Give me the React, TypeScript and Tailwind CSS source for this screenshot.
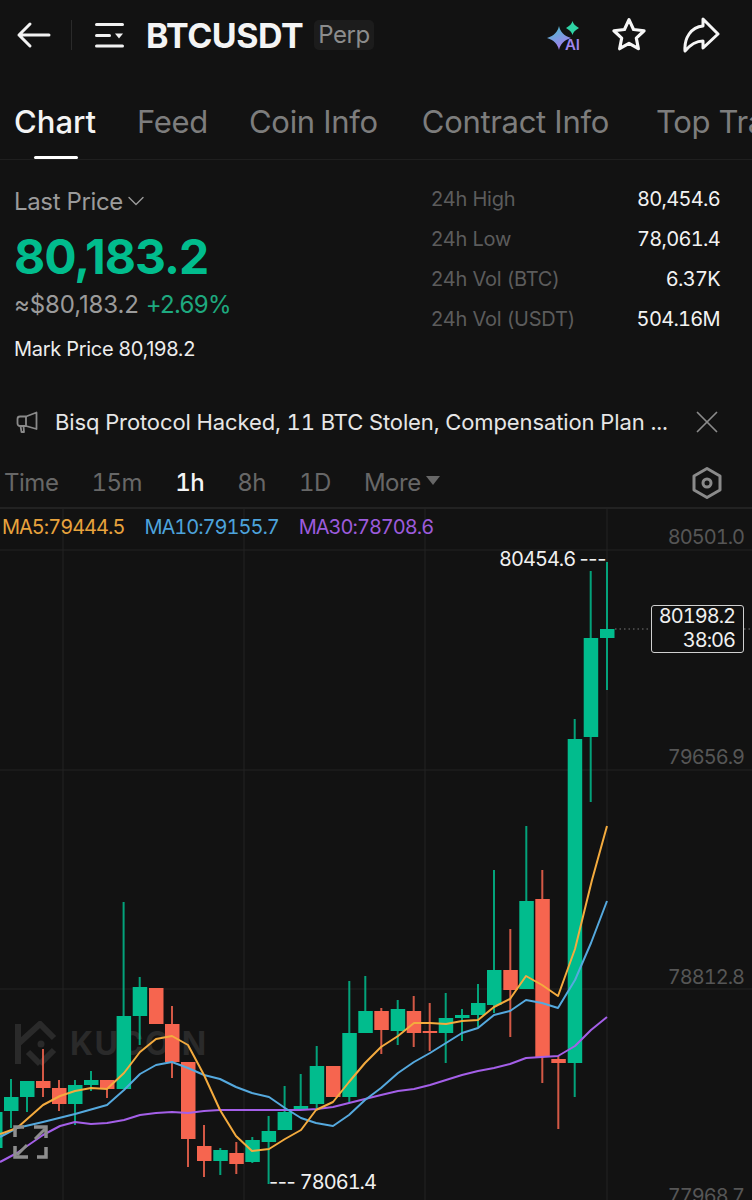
import { ChevronDown, X } from 'lucide-react';

const UP = '#01bc8d';
const DOWN = '#f6654f';

// x centre, body top, body bottom, wick top, wick bottom
const candles: [number, number, number, number, number, string][] = [
  [-5, 1112, 1148, 1100, 1150, UP],
  [11, 1097, 1111, 1079, 1128, UP],
  [27, 1081, 1097, 1081, 1112, UP],
  [43, 1081, 1088, 1049, 1097, DOWN],
  [59, 1088, 1104, 1080, 1111, DOWN],
  [75, 1085, 1104, 1080, 1125, UP],
  [91, 1080, 1085, 1071, 1091, UP],
  [107, 1080, 1089, 1080, 1098, DOWN],
  [123.6, 1016, 1089, 902, 1089, UP],
  [139.7, 987, 1016, 977, 1045, UP],
  [156, 988, 1024, 988, 1024, DOWN],
  [172, 1024, 1062, 1006, 1078, DOWN],
  [188, 1062, 1139, 1062, 1167, DOWN],
  [204, 1146, 1161, 1125, 1177, DOWN],
  [220.3, 1150, 1161, 1148, 1175, UP],
  [236.3, 1153, 1164, 1142, 1174, DOWN],
  [252.3, 1140, 1162, 1137, 1163, UP],
  [268.6, 1131, 1142, 1116, 1184, UP],
  [284.6, 1112, 1130, 1086, 1130, UP],
  [300.7, 1106, 1110, 1074, 1110, UP],
  [316.7, 1066, 1104, 1046, 1108, UP],
  [333, 1066, 1097, 1066, 1097, DOWN],
  [349.3, 1033, 1097, 981, 1102, UP],
  [365.3, 1011, 1033, 976, 1033, UP],
  [381.3, 1011, 1030, 1008, 1054, DOWN],
  [397.7, 1009, 1031, 1000, 1045, UP],
  [413.7, 1011, 1033, 996, 1047, DOWN],
  [429.7, 1031, 1033, 1003, 1051, DOWN],
  [445.7, 1018, 1033, 993, 1063, UP],
  [462, 1015, 1018, 1009, 1041, UP],
  [478, 1003, 1015, 984, 1027, UP],
  [494, 970, 1005, 870, 1013, UP],
  [510.3, 970, 990, 929, 1037, DOWN],
  [526.3, 901, 989, 826, 989, UP],
  [542.3, 899, 1057, 870, 1083, DOWN],
  [558.3, 1059, 1063, 1056, 1129, DOWN],
  [574.7, 739, 1063, 719, 1097, UP],
  [590.7, 638, 737, 571, 802, UP],
  [607, 629, 638, 562, 690, UP],
];

const ma5 = '0,1134 17,1128 43,1105 60,1096 75,1091 91,1088 107,1089 124,1073 140,1052 156,1039 172,1036 188,1045 204,1075 220,1110 236,1136 252,1151 269,1149 285,1139 301,1130 316,1110 333,1102 349,1082 365,1063 381,1047 398,1036 414,1023 430,1023 446,1024 462,1021 478,1020 494,1007 510,999 526,976 542,985 558,996 575,949 592,880 607,826';
const ma10 = '0,1137 17,1128 43,1122 75,1114 107,1105 124,1090 140,1074 156,1065 172,1062 188,1068 204,1075 220,1079 236,1087 252,1093 269,1097 285,1108 301,1118 316,1123 333,1126 349,1115 365,1100 381,1088 398,1073 414,1062 430,1053 446,1043 462,1033 478,1028 494,1015 510,1011 526,1000 542,1003 558,1008 575,980 591,943 607,901';
const ma30 = '0,1162 17,1153 43,1135 60,1126 75,1122 91,1124 107,1123 124,1120 140,1115 156,1113 172,1112 188,1113 204,1111 220,1110 252,1110 285,1110 300,1110 317,1109 333,1107 349,1103 365,1099 381,1095 398,1091 414,1089 430,1085 446,1080 462,1075 478,1071 494,1068 510,1064 526,1058 542,1057 558,1056 575,1046 591,1030 607,1017';

const stats = [
  ['24h High', '80,454.6'],
  ['24h Low', '78,061.4'],
  ['24h Vol (BTC)', '6.37K'],
  ['24h Vol (USDT)', '504.16M'],
];

const axis = [
  ['80501.0', 'top-[16px]'],
  ['79656.9', 'top-[236px]'],
  ['78812.8', 'top-[456px]'],
  ['77968.7', 'top-[675px]'],
];

function Header() {
  return (
    <div className="flex h-[70px] items-center">
      <svg width="36" height="30" viewBox="0 0 36 30" fill="none" stroke="#f2f2f2" strokeWidth="3" strokeLinecap="round" strokeLinejoin="round" className="ml-[16px]">
        <path d="M33 15H3M14 4 3 15l11 11" />
      </svg>
      <div className="ml-[19px] h-[30px] w-px bg-[#2a2a2a]" />
      <svg width="30" height="26" viewBox="0 0 30 26" fill="#f2f2f2" className="ml-[23px]">
        <rect x="0" y="1" width="29" height="3" rx="1.5" />
        <rect x="0" y="12" width="16" height="3" rx="1.5" />
        <path d="M20 11.5h8l-4 5z" />
        <rect x="0" y="22.5" width="29" height="3" rx="1.5" />
      </svg>
      <span className="ml-[21px] w-[158px] whitespace-nowrap text-[34px] font-bold tracking-[-0.015em] text-[#f4f4f4]">BTCUSDT</span>
      <span className="ml-[10px] flex h-[30px] w-[60px] items-center justify-center rounded-[5px] bg-[#1c1c1c] text-[24px] tracking-[-0.02em] text-[#8c8c8c]">Perp</span>
      <div className="relative ml-[172px] h-[32px] w-[34px]">
        <svg width="34" height="32" viewBox="0 0 34 32">
          <defs>
            <linearGradient id="spark" x1="0" y1="0" x2="0.5" y2="1">
              <stop offset="0" stopColor="#3fc6c8" />
              <stop offset="1" stopColor="#a67bf0" />
            </linearGradient>
          </defs>
          <path d="M13 7c1.500 6 4.500 9.500 12 12-7.500 2.500-10.500 6-12 12-1.500-6-4.500-9.500-12-12 7.500-2.500 10.500-6 12-12z" fill="url(#spark)" />
          <path d="M26.500 2c.8 3 2.500 4.700 6.500 7-4 2.300-5.700 4-6.500 7-.8-3-2.500-4.700-6.500-7 4-2.300 5.700-4 6.500-7z" fill="#2fd3a5" />
        </svg>
        <span className="absolute right-[0px] bottom-[-1px] text-[15px] font-semibold leading-none text-[#9f86ee]">AI</span>
      </div>
      <svg width="38" height="38" viewBox="0 0 36 36" fill="none" stroke="#f6f6f6" strokeWidth="3" strokeLinejoin="round" className="ml-[30px]">
        <path d="M18 3.500l4.300 9.300 10 1.200-7.400 6.900 2 10.100L18 25.900 9.100 31l2-10.100L3.700 14l10-1.200z" />
      </svg>
      <svg width="38" height="38" viewBox="0 0 38 38" fill="none" stroke="#f6f6f6" strokeWidth="3" strokeLinejoin="round" strokeLinecap="round" className="ml-[34px]">
        <path d="M21 3 36 18 21 32v-7c-8 0-13 4-18 10C2 22 9 11 21 10z" />
      </svg>
    </div>
  );
}

function Tabs() {
  return (
    <div className="relative flex h-[90px] gap-[41px] overflow-hidden whitespace-nowrap border-b border-[#1f1f1f] pl-[14px] pt-[30px] text-[31px] leading-[44px] tracking-[-0.01em] text-[#7d7d7d]">
      <div className="relative h-[59px] font-medium tracking-normal text-[#f4f4f4]">
        Chart
        <div className="absolute bottom-0 left-[20px] h-[3px] w-[44px] rounded-sm bg-white" />
      </div>
      <span>Feed</span>
      <span>Coin Info</span>
      <span className="ml-[3px]">Contract Info</span>
      <span className="ml-[6px]">Top Traders</span>
    </div>
  );
}

function PriceBlock() {
  return (
    <div className="flex h-[240px] pl-[14px] pt-[24px]">
      <div className="w-[417px]">
        <div className="flex h-[36px] items-center text-[24px] tracking-[-0.015em] text-[#9b9b9b]">
          Last Price
          <ChevronDown size={28} strokeWidth={1.2} className="-ml-[1px] mb-[3px] -mr-[7px]" />
        </div>
        <div className="mt-[6px] h-[62px] text-[48px] font-bold leading-[62px] tracking-[-0.02em] text-[#01bc8d]">80,183.2</div>
        <div className="flex h-[34px] items-center text-[24px] tracking-[-0.005em] text-[#9b9b9b]">
          ≈$80,183.2
          <span className="ml-[7px] tracking-[-0.03em] text-[#1ea97f]">+2.69%</span>
        </div>
        <div className="mt-[11px] text-[20px] leading-[32px] tracking-[-0.015em] text-[#ededed]">Mark Price 80,198.2</div>
      </div>
      <div className="mt-[-5px] w-[289px]">
        {stats.map(([label, value]) => (
          <div key={label} className="flex h-[40px] items-center justify-between text-[20px]">
            <span className="tracking-[-0.01em] text-[#5c5c5c]">{label}</span>
            <span className="tabular-nums tracking-[-0.035em] text-[#f2f2f2]">{value}</span>
          </div>
        ))}
      </div>
    </div>
  );
}

function NewsBar() {
  return (
    <div className="flex h-[44px] items-center pl-[16px] text-[22px] text-[#e6e6e6]">
      <svg width="22" height="24" viewBox="0 0 22 24" fill="none" stroke="#8a8a8a" strokeWidth="1.800" strokeLinejoin="round">
        <path d="M10 6.500 20.500 2.500v16.500L10 16H4a2.500 2.500 0 0 1-2.500-2.500V9A2.500 2.500 0 0 1 4 6.500z" />
        <path d="M10 6.500V16M4.500 16l1 6h2.500l-.5-6" />
      </svg>
      <span className="ml-[17px] w-[625px] truncate whitespace-nowrap tabular-nums tracking-[-0.005em]">Bisq Protocol Hacked, 11 BTC Stolen, Compensation Plan ...</span>
      <X size={38} strokeWidth={1.1} className="ml-[8px] text-[#8a8a8a]" />
    </div>
  );
}

function Intervals() {
  return (
    <div className="relative mt-[18px] flex h-[47px] items-center gap-[33px] border-b-2 border-[#222222] pb-[3px] pl-[4px] text-[24px] tabular-nums tracking-[-0.02em] text-[#676767]">
      <span>Time</span>
      <span>15m</span>
      <span className="font-medium text-[#f4f4f4]">1h</span>
      <span>8h</span>
      <span>1D</span>
      <span className="flex items-center">
        More
        <svg width="14" height="10" viewBox="0 0 14 10" fill="#676767" className="ml-[5px] mb-[4px]"><path d="M0 0h14L7 9z" /></svg>
      </span>
      <svg width="32" height="34" viewBox="0 0 32 34" fill="none" stroke="#8a8a8a" strokeWidth="3" strokeLinejoin="round" className="absolute right-[29px] top-[4px]">
        <path d="M16 2.500 29 10v14l-13 7.500L3 24V10z" />
        <circle cx="16" cy="17" r="4" />
      </svg>
    </div>
  );
}

function Chart() {
  return (
    <div className="relative h-[691px] overflow-hidden tabular-nums">
      {/* watermark */}
      <svg width="44" height="46" viewBox="0 0 44 46" fill="none" stroke="#2a2a2a" strokeWidth="6" className="absolute left-[14px] top-[512px]">
        <path d="M4 3v40M4 23 26 3l14 14M26 43 14 31M26 43l14-14" />
        <circle cx="27" cy="23" r="3.500" fill="#2a2a2a" stroke="none" />
      </svg>
      <div className="absolute left-[70px] top-[511px] text-[32px] font-bold leading-[48px] tracking-[0.05em] text-[#2a2a2a]">KUCOIN</div>

      {/* y values in the svg are page coordinates, hence the viewBox offset */}
      <svg width="752" height="691" viewBox="0 509 752 691" fill="none" className="absolute inset-0">
        {[63, 244, 425, 607].map(x => <path key={x} d={`M${x} 509V1200`} stroke="#232323" strokeWidth="1" />)}
        {[550, 770, 989].map(y => <path key={y} d={`M0 ${y}H752`} stroke="#232323" strokeWidth="1" />)}
        <path d="M615 629H650M744 629H752" stroke="#555555" strokeWidth="1.500" strokeDasharray="1.500 3" />
        {candles.map(([x, top, bottom, wickTop, wickBottom, color]) => (
          <g key={x}>
            <rect x={x - 1} y={wickTop} width="2" height={wickBottom - wickTop} fill={color} opacity="0.85" />
            <rect x={x - 7} y={top} width="14.500" height={bottom - top} fill={color} />
          </g>
        ))}
        <polyline points={ma30} stroke="#a45fe8" strokeWidth="2" strokeLinejoin="round" />
        <polyline points={ma10} stroke="#55a9de" strokeWidth="2" strokeLinejoin="round" />
        <polyline points={ma5} stroke="#f4ab3e" strokeWidth="2" strokeLinejoin="round" />
        {/* fullscreen */}
        <g stroke="#8e8e8e" strokeWidth="3.500">
          <path d="M15 1137v-10h9M34 1127h12v11M46 1147v10h-9M28 1157H15v-11" />
          <path d="M17 1155l10-10M35 1139l10-10" strokeWidth="3" />
        </g>
      </svg>

      <div className="absolute left-[2px] top-[5px] flex gap-[20px] text-[20px] leading-[26px] tracking-[-0.05em]">
        <span className="text-[#e8a33d]">MA5:79444.5</span>
        <span className="text-[#4da3dc]">MA10:79155.7</span>
        <span className="text-[#9c5bdc]">MA30:78708.6</span>
      </div>

      {axis.map(([value, top]) => (
        <div key={value} className={`absolute right-[8px] text-[20px] leading-[24px] tracking-[-0.05em] text-[#565656] ${top}`}>{value}</div>
      ))}

      <div className="absolute left-[499px] top-[38px] text-[20px] leading-[24px] tracking-[-0.05em] text-[#f0f0f0]">
        80454.6 <span className="normal-nums tracking-[-0.02em]">---</span>
      </div>
      <div className="absolute left-[269px] top-[661px] text-[20px] leading-[24px] tracking-[-0.05em] text-[#f0f0f0]">
        <span className="normal-nums tracking-[-0.02em]">---</span> 78061.4
      </div>

      <div className="absolute left-[651px] top-[96px] flex h-[48px] w-[93px] flex-col items-end justify-center rounded-[3px] border border-[#d0d0d0] pb-[2px] pr-[8px] text-[20px] leading-[24px] tracking-[-0.05em] text-[#f0f0f0]">
        <span>80198.2</span>
        <span>38:06</span>
      </div>
    </div>
  );
}

export default function App() {
  return (
    <div className="h-[1200px] w-[752px] overflow-hidden bg-[#121212] font-['Inter',sans-serif]">
      <Header />
      <Tabs />
      <PriceBlock />
      <NewsBar />
      <Intervals />
      <Chart />
    </div>
  );
}
